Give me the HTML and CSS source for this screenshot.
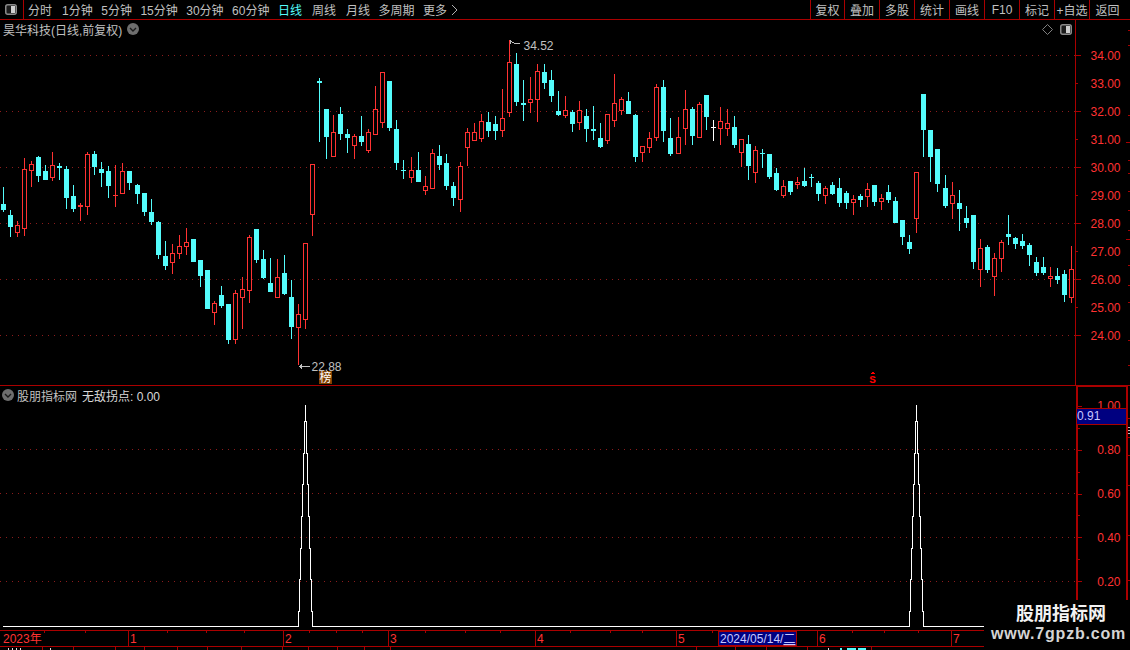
FILE: index.html
```html
<!DOCTYPE html>
<html lang="zh">
<head>
<meta charset="utf-8">
<title>昊华科技</title>
<link rel="stylesheet" href="styles.css">
</head>
<body>
<div class="app">
  <header class="toolbar">
    <div class="panel-toggle">
      <svg class="icon-layout" viewBox="0 0 12 11"><rect x="0.75" y="0.75" width="10.5" height="9.5" rx="2" class="icon-frame"/><rect x="6" y="2" width="4" height="7" class="icon-fill"/></svg>
    </div>
    <nav class="periods">
      <span class="period wide">分时</span>
      <span class="period">1分钟</span>
      <span class="period">5分钟</span>
      <span class="period">15分钟</span>
      <span class="period">30分钟</span>
      <span class="period">60分钟</span>
      <span class="period active wide">日线</span>
      <span class="period wide">周线</span>
      <span class="period">月线</span>
      <span class="period">多周期</span>
      <span class="period more">更多<svg class="more-arrow" viewBox="0 0 7 12"><path d="M1 1l5 5-5 5"/></svg></span>
    </nav>
    <div class="actions">
      <span class="action first">复权</span>
      <span class="action">叠加</span>
      <span class="action">多股</span>
      <span class="action">统计</span>
      <span class="action">画线</span>
      <span class="action">F10</span>
      <span class="action">标记</span>
      <span class="action">+自选</span>
      <span class="action last">返回</span>
    </div>
  </header>

  <section class="pane pane-price">
    <div class="plot">
      <div class="pane-head">
        <span class="title">昊华科技(日线,前复权)</span>
        <svg class="chevron-dot" viewBox="0 0 12 12"><circle cx="6" cy="6" r="6"/><path d="M3 5l3 3 3-3"/></svg>
        <span class="head-tools">
          <svg class="icon-diamond" viewBox="0 0 11 11"><path d="M5.5 0.5l5 5-5 5-5-5z"/></svg>
          <svg class="icon-layout" viewBox="0 0 12 11"><rect x="0.75" y="0.75" width="10.5" height="9.5" rx="2" class="icon-frame"/><rect x="6" y="2" width="4" height="7" class="icon-fill"/></svg>
        </span>
      </div>
      <svg id="candles" class="canvas price-canvas" viewBox="0 38 1075 347"></svg>
    </div>
    <div class="axis">
      <svg id="price-axis" class="canvas" viewBox="1076 20 54 365"></svg>
    </div>
  </section>

  <section class="pane pane-indicator">
    <div class="plot plot-indicator">
      <div class="pane-head">
        <svg class="chevron-dot lead" viewBox="0 0 12 12"><circle cx="6" cy="6" r="6"/><path d="M3 5l3 3 3-3"/></svg>
        <span class="title">股朋指标网</span>
        <span class="value">无敌拐点: 0.00</span>
      </div>
      <svg class="canvas indicator-canvas" viewBox="0 404 1076 226">
        <g class="grid">
          <line x1="0" x2="1076" y1="449.5" y2="449.5"/>
          <line x1="0" x2="1076" y1="493.5" y2="493.5"/>
          <line x1="0" x2="1076" y1="537.5" y2="537.5"/>
          <line x1="0" x2="1076" y1="581.5" y2="581.5"/>
        </g>
        <path class="spike" d="M3 626.5H298.5V611H299.5V579H300.5V548H301.5V516H302.5V484H303.5V453H304.5V421H305.5V405V421H306.5V453H307.5V484H308.5V516H309.5V548H310.5V579H311.5V611H312.5V626.5H909.5V611H910.5V579H911.5V548H912.5V516H913.5V484H914.5V453H915.5V421H916.5V405V421H917.5V453H918.5V484H919.5V516H920.5V548H921.5V579H922.5V611H923.5V626.5H1000"/>
      </svg>
    </div>
    <div class="axis axis-indicator">
      <svg class="canvas" viewBox="1078 386 48 244">
        <g class="ticks">
          <path d="M1078 405.5h4M1078 427.5h2M1078 449.5h4M1078 471.5h2M1078 493.5h4M1078 515.5h2M1078 537.5h4M1078 559.5h2M1078 581.5h4M1078 603.5h2"/>
        </g>
        <g class="axis-labels">
          <text x="1120.5" y="409.5">1.00</text>
          <text x="1120.5" y="453.5">0.80</text>
          <text x="1120.5" y="497.5">0.60</text>
          <text x="1120.5" y="541.5">0.40</text>
          <text x="1120.5" y="585.5">0.20</text>
        </g>
      </svg>
      <div class="cursor-value">0.91</div>
    </div>
    <svg class="edge-marks" viewBox="0 0 2 245"><path class="edge-red" d="M0 33h2M0 52h2M0 70h2M0 100h2M0 150h2M0 195h2"/><path class="edge-white" d="M0 42h2M0 45h2M0 48h2"/></svg>
  </section>

  <section class="timeline">
    <svg class="canvas" viewBox="0 631 1130 15">
      <path class="time-line" d="M128.5 631v15M283.5 631v15M388.5 631v15M535.5 631v15M676.5 631v15M817.5 631v15M951.5 631v15"/>
      <path class="time-line" d="M44.5 631v2M85.5 631v2M167.5 631v2M206.5 631v2M244.5 631v2M309.5 631v2M336.5 631v2M362.5 631v2M425.5 631v2M465.5 631v2M500.5 631v2M570.5 631v2M610.5 631v2M642.5 631v2M712.5 631v2M852.5 631v2M884.5 631v2M918.5 631v2"/>
      <g class="time-labels">
        <text x="3" y="643">2023年</text>
        <text x="130" y="643">1</text>
        <text x="285" y="643">2</text>
        <text x="390" y="643">3</text>
        <text x="537" y="643">4</text>
        <text x="678" y="643">5</text>
        <text x="819" y="643">6</text>
        <text x="953" y="643">7</text>
      </g>
      <rect class="date-box" x="718.5" y="631.5" width="78" height="14"/>
      <text class="date-text" x="720" y="643">2024/05/14/<tspan class="date-day">二</tspan></text>
    </svg>
  </section>

  <div class="strip">
    <svg class="canvas" viewBox="0 647 1130 3">
      <path class="time-line" d="M42.5 647v3M73.5 647v3M115.5 647v3M144.5 647v3M177.5 647v3M207.5 647v3M241.5 647v3M282.5 647v3M308.5 647v3M337.5 647v3M364.5 647v3M390.5 647v3M696.5 647v3M735.5 647v3M766.5 647v3M807.5 647v3M871.5 647v3"/>
      <path class="strip-white" d="M8 648h1v2H8zM12 648h1v2h-1zM16 648h1v2h-1zM20 648h1v2h-1zM50 648h1v2h-1zM828 648h1v2h-1z"/>
      <path class="strip-cyan" d="M840 648h2v2h-2zM847 648h9v2h-9zM858 648h8v2h-8z"/>
    </svg>
  </div>

  <aside class="watermark">
    <div class="wm-title">股朋指标网</div>
    <div class="wm-url">www.7gpzb.com</div>
  </aside>
</div>
<script src="chart.js"></script>
</body>
</html>
```

FILE: styles.css
```css
* { box-sizing: border-box; }
html, body { margin: 0; padding: 0; background: #000; }
body {
  font-family: "Liberation Sans", "Noto Sans CJK SC", sans-serif;
  font-size: 12px;
  color: #c0c0c0;
}
.app {
  position: relative;
  width: 1130px;
  height: 650px;
  overflow: hidden;
  display: flex;
  flex-direction: column;
  background: #000;
}
.canvas { display: block; width: 100%; height: 100%; shape-rendering: crispEdges; }

/* toolbar */
.toolbar {
  flex: 0 0 20px;
  display: flex;
  align-items: stretch;
  border-bottom: 1px solid #aa0000;
}
.panel-toggle {
  width: 24px;
  border-right: 1px solid #aa0000;
  display: flex;
  align-items: center;
  justify-content: center;
  padding-right: 1px;
}
.icon-layout { width: 12px; height: 11px; display: block; }
.icon-frame { fill: #1c1c1c; stroke: #8a8a8a; stroke-width: 1.5; }
.icon-fill { fill: #d0d0d0; }
.periods {
  display: flex;
  align-items: center;
  gap: 8.5px;
  padding-left: 4px;
  white-space: nowrap;
}
.period { display: flex; align-items: center; color: #c0c0c0; }
.period.wide { margin-right: 1.5px; }
.period.active { color: #54fcfc; }
.more-arrow { width: 7px; height: 12px; margin-left: 4px; fill: none; stroke: #b0b0b0; stroke-width: 1; }
.actions { margin-left: auto; display: flex; }
.action {
  width: 35px;
  border-left: 1px solid #aa0000;
  display: flex;
  align-items: center;
  justify-content: center;
  white-space: nowrap;
  color: #c0c0c0;
}
.action.first { width: 34px; }
.action.last { width: 41px; padding-right: 5px; }

/* panes */
.pane { display: flex; min-height: 0; overflow: hidden; }
.pane-price { flex: 0 0 365px; }
.pane-indicator { flex: 0 0 245px; border-top: 1px solid #aa0000; position: relative; }
.plot { width: 1075px; min-height: 0; display: flex; flex-direction: column; }
.plot-indicator { width: 1076px; }
.pane-head {
  flex: 0 0 18px;
  display: flex;
  align-items: center;
  padding-left: 3px;
  white-space: nowrap;
  color: #c0c0c0;
}
.chevron-dot { width: 12px; height: 12px; margin-left: 5px; fill: #6e6e6e; }
.chevron-dot path { fill: none; stroke: #1a1a1a; stroke-width: 1.4; }
.chevron-dot.lead { margin: 0 3px 0 -1px; }
.value { margin-left: 5px; color: #d8d8d8; }
.head-tools { margin-left: auto; display: flex; align-items: center; gap: 7px; padding-right: 3px; }
.icon-diamond { width: 11px; height: 11px; fill: none; stroke: #808080; stroke-width: 1; }
.price-canvas, .indicator-canvas { flex: 1 1 0; min-height: 0; }

.axis { flex: 1; min-height: 0; border-left: 1px solid #aa0000; }
.axis-indicator {
  position: relative;
  flex: 0 0 52px;
  border-left: 2px solid #aa0000;
  border-right: 2px solid #aa0000;
  border-top: 1px solid #aa0000;
}
.axis-labels text, .time-labels text {
  font-family: "Liberation Sans", "Noto Sans CJK SC", sans-serif;
  font-size: 12px;
  fill: #ff3232;
  shape-rendering: auto;
}
.axis-labels text { text-anchor: end; }
.ticks path { fill: none; stroke: #aa0000; stroke-width: 1; }
.cursor-value {
  position: absolute;
  left: -1px;
  right: 0;
  top: 21px;
  height: 17px;
  background: #000080;
  border-top: 1px solid #aa0000;
  border-bottom: 1px solid #aa0000;
  color: #c8c8ff;
  line-height: 15px;
}
.edge-marks { flex: 0 0 2px; width: 2px; height: 100%; display: block; shape-rendering: crispEdges; }
.edge-red { fill: none; stroke: #aa0000; stroke-width: 1; }
.edge-white { fill: none; stroke: #c0c0c0; stroke-width: 1; }

/* chart marks */
.grid line { stroke: #8c1c1c; stroke-width: 1; stroke-dasharray: 1 5; }
.spike { fill: none; stroke: #fff; stroke-width: 1; }
.price-mark { font-family: "Liberation Sans", sans-serif; font-size: 12px; fill: #c0c0c0; shape-rendering: auto; }
.mark-line { fill: none; stroke: #c0c0c0; stroke-width: 1; }
.bang-box { fill: #804000; }
.bang-text { font-family: "Noto Sans CJK SC", sans-serif; font-size: 12px; fill: #fff; }
.sell-mark { font-family: "Liberation Mono", monospace; font-weight: 700; font-size: 11px; fill: #ff0000; text-anchor: middle; }
.sell-arrow { fill: #ff0000; }

/* timeline */
.timeline {
  flex: 0 0 17px;
  min-height: 0;
  border-top: 1px solid #aa0000;
  border-bottom: 1px solid #aa0000;
}
.time-line { fill: none; stroke: #aa0000; stroke-width: 1; }
.date-box { fill: #000080; stroke: #aa0000; stroke-width: 1; }
.date-text {
  font-family: "Liberation Sans", "Noto Sans CJK SC", sans-serif;
  font-size: 12px;
  fill: #c8c8ff;
  shape-rendering: auto;
}
.date-day { text-decoration: underline; }
.strip { flex: 0 0 3px; min-height: 0; overflow: hidden; }
.strip-white { fill: #e0e0e0; }
.strip-cyan { fill: #54fcfc; }

/* watermark */
.watermark {
  position: absolute;
  right: 0;
  bottom: 0;
  width: 146px;
  height: 50px;
  background: #000;
  display: flex;
  flex-direction: column;
  align-items: center;
  padding-top: 1px;
}
.wm-title {
  font-family: "Noto Sans CJK SC", sans-serif;
  font-weight: 700;
  font-size: 18px;
  line-height: 22px;
  color: #f2f2f2;
  margin-left: 8px;
}
.wm-url {
  font-family: "Liberation Sans", sans-serif;
  font-weight: 700;
  font-size: 16px;
  line-height: 18px;
  letter-spacing: 0.8px;
  color: #d4d4d4;
  margin-top: 2px;
  margin-left: 3px;
}
```

FILE: chart.js
```js
// [kind, bodyTop, bodyBottom, wickTop, wickBottom]  kind: 0 cyan, 1 red, 2 white
var D = [
[0,204,210,187,212],[0,215,227,210,237],[1,225,233,221,237],[1,169,229,158,236],[1,164,171,161,187],
[0,157,176,156,182],[0,171,180,165,180],[1,165,178,152,181],[0,166,168,163,180],[0,169,198,166,209],
[0,196,209,185,212],[1,205,207,203,221],[1,154,207,152,215],[0,154,167,151,175],[0,169,173,162,187],
[0,171,186,166,198],[1,195,196,165,207],[1,171,194,163,194],[0,171,183,171,190],[0,185,194,184,204],
[0,193,212,193,216],[0,212,222,199,225],[0,222,255,221,259],[0,256,266,241,270],[1,253,263,244,274],
[1,246,254,235,259],[1,242,247,228,255],[0,239,262,239,262],[0,260,276,260,287],[0,270,309,270,309],
[1,303,313,301,325],[0,295,306,286,308],[0,304,340,304,344],[1,293,340,290,344],[1,289,298,277,329],
[1,237,291,235,303],[0,229,260,229,263],[0,259,278,250,279],[0,283,292,258,292],[1,277,298,259,298],
[0,273,294,255,295],[0,297,327,280,339],[1,314,328,304,365],[1,243,320,243,329],[1,164,215,164,236],
[0,81,83,78,142],[0,109,137,109,159],[1,132,157,115,157],[0,114,134,107,140],[0,134,138,129,153],
[1,136,146,134,159],[0,136,142,116,146],[1,132,151,129,153],[1,109,135,86,135],[1,72,123,72,128],
[0,81,128,81,131],[0,129,163,120,170],[0,170,171,160,179],[1,170,178,157,183],[0,170,182,152,182],
[1,186,191,176,195],[1,153,189,149,189],[0,156,165,145,170],[0,163,186,154,190],[0,186,198,182,206],
[1,166,200,162,212],[1,132,148,128,166],[1,132,141,123,141],[1,121,139,114,142],[0,122,131,112,137],
[0,124,131,116,140],[1,118,131,89,137],[1,62,113,40,117],[0,64,102,53,106],[0,103,105,80,121],
[1,99,103,77,113],[1,71,100,64,122],[0,72,83,64,89],[0,80,96,70,102],[0,111,115,91,116],
[1,110,116,96,118],[0,112,124,110,132],[1,110,123,101,130],[0,116,129,109,142],[0,129,131,106,140],
[0,138,147,123,148],[1,114,141,114,144],[1,103,121,74,127],[1,99,111,97,115],[0,101,114,92,114],
[0,115,157,114,162],[1,146,153,146,162],[1,138,148,132,153],[1,87,138,84,141],[0,87,131,80,142],
[0,138,154,118,156],[1,137,154,117,154],[1,109,129,90,145],[0,109,136,107,145],[1,104,138,102,138],
[0,95,117,95,130],[2,127,128,120,141],[1,121,129,107,145],[1,123,129,109,136],[0,127,145,116,148],
[1,139,153,139,167],[0,144,166,135,180],[1,150,173,146,183],[0,153,154,149,168],[0,154,177,154,179],
[0,173,190,168,191],[1,186,196,180,198],[0,181,192,181,195],[1,182,185,177,189],[0,181,186,168,187],
[0,177,178,174,187],[0,183,194,181,201],[1,188,196,186,204],[0,185,194,182,195],[0,188,203,178,207],
[0,193,203,191,209],[1,199,203,195,215],[0,196,200,194,207],[1,189,197,183,207],[0,185,202,185,206],
[1,198,202,194,210],[0,192,200,185,203],[0,201,223,197,223],[0,220,237,220,245],[0,242,249,235,254],
[1,172,219,172,233],[0,94,130,94,157],[0,130,157,130,182],[0,149,184,149,192],[0,188,206,175,208],
[1,195,204,182,219],[0,203,209,190,231],[0,218,223,206,228],[0,215,262,215,269],[1,248,270,239,287],
[0,247,270,245,273],[1,258,277,253,296],[1,242,259,240,272],[0,234,237,215,245],[0,238,244,237,249],
[0,241,246,234,249],[0,245,255,243,266],[0,262,273,257,276],[0,267,273,257,275],[1,276,279,267,287],
[0,276,280,268,284],[0,274,295,270,302],[1,269,298,246,303]
];
var NS = "http://www.w3.org/2000/svg";
function el(tag, attrs, text) {
  var n = document.createElementNS(NS, tag);
  for (var k in attrs) n.setAttribute(k, attrs[k]);
  if (text) n.textContent = text;
  return n;
}
var COLORS = ["#54fcfc", "#ff3232", "#ffffff"];
var svg = document.getElementById("candles");

var grid = el("g", { "class": "grid" });
[55.5, 111.5, 167.5, 223.5, 279.5, 335.5].forEach(function (y) {
  grid.appendChild(el("line", { x1: 0, x2: 1075, y1: y, y2: y }));
});
svg.appendChild(grid);

D.forEach(function (c, i) {
  var jump = (i >= 19) + (i >= 58) + (i >= 96) + (i >= 134);
  var x = 3 + 7 * i + jump;
  var col = COLORS[c[0]];
  svg.appendChild(el("rect", { x: x, y: c[3], width: 1, height: c[4] - c[3], fill: col }));
  if (c[0] === 1 && c[2] - c[1] > 2) {
    svg.appendChild(el("rect", { x: x - 1.5, y: c[1] + 0.5, width: 4, height: c[2] - c[1] - 1, fill: "#000", stroke: col }));
  } else {
    svg.appendChild(el("rect", { x: x - 2, y: c[1], width: 5, height: Math.max(1, c[2] - c[1]), fill: col }));
  }
});

// high / low markers
svg.appendChild(el("path", { "class": "mark-line", d: "M510 40V44M510 41L514 43L517 43L520 44" }));
svg.appendChild(el("text", { "class": "price-mark", x: 523.5, y: 50 }, "34.52"));
svg.appendChild(el("path", { "class": "mark-line", d: "M299.5 366.5H310M299.5 366.5L302 364.5M299.5 366.5L302 368.5" }));
svg.appendChild(el("text", { "class": "price-mark", x: 311.5, y: 371 }, "22.88"));
svg.appendChild(el("rect", { "class": "bang-box", x: 319, y: 371, width: 13, height: 13 }));
svg.appendChild(el("text", { "class": "bang-text", x: 319.5, y: 382 }, "榜"));
svg.appendChild(el("path", { "class": "sell-arrow", d: "M872.5 371.5L875 374H870Z" }));
svg.appendChild(el("text", { "class": "sell-mark", x: 872.5, y: 383 }, "S"));

// price axis
var axis = document.getElementById("price-axis");
var tickPath = "";
var labels = el("g", { "class": "axis-labels" });
for (var v = 34; v >= 24; v--) {
  var y = 55.5 + (34 - v) * 28;
  tickPath += "M1076 " + y + "h" + ((34 - v) % 2 ? 2 : 5);
  labels.appendChild(el("text", { x: 1120.5, y: y + 4 }, v.toFixed(2)));
}
var ticks = el("g", { "class": "ticks" });
ticks.appendChild(el("path", { d: tickPath }));
axis.appendChild(ticks);
axis.appendChild(labels);
var edge = "";
[30, 45, 115, 160, 173, 191, 210, 230, 265, 285, 302, 340, 365].forEach(function (y) {
  edge += "M1128 " + (y + 0.5) + "h2";
});
[142, 239].forEach(function (y) { edge += "M1126 " + (y + 0.5) + "h4"; });
axis.appendChild(el("path", { "class": "edge-red", d: edge }));
```
